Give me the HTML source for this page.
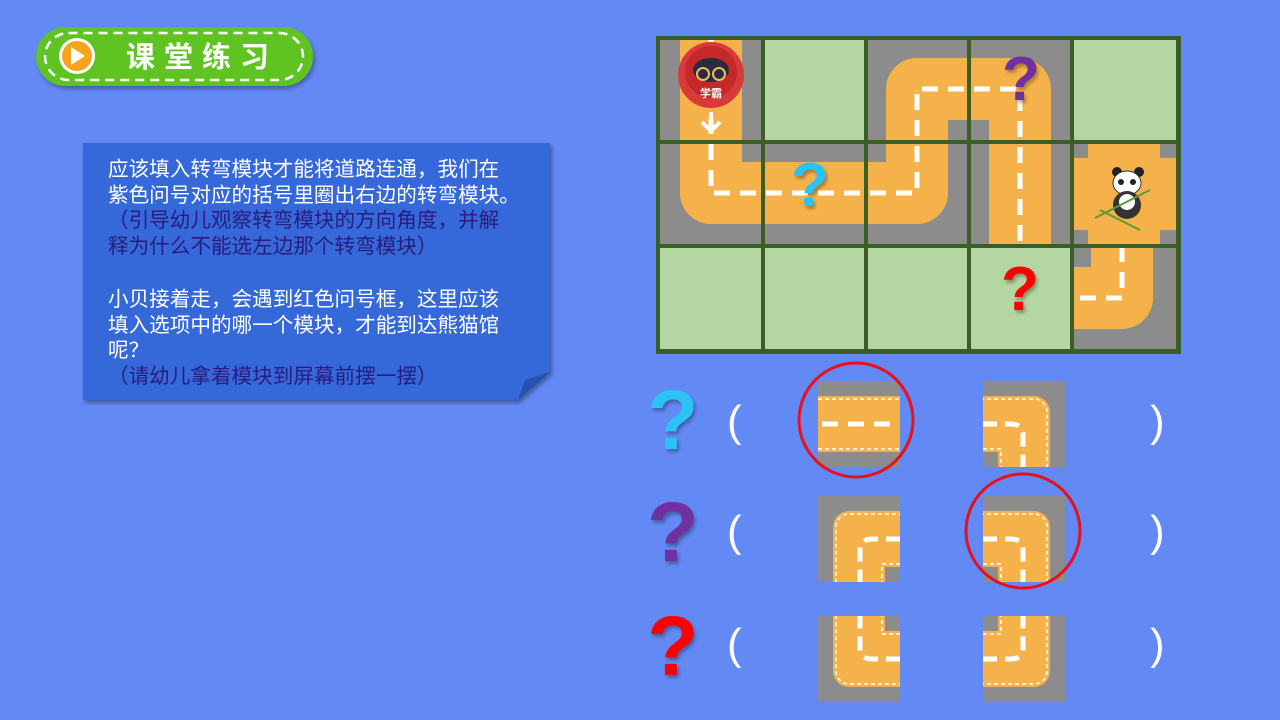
<!DOCTYPE html>
<html><head><meta charset="utf-8">
<style>
html,body{margin:0;padding:0}
body{width:1280px;height:720px;background:#6389F4;position:relative;overflow:hidden;font-family:"Liberation Sans","Noto Sans CJK SC",sans-serif}
.abs{position:absolute}
.txt{position:absolute;left:108px;font-size:20.6px;line-height:25.6px;white-space:nowrap;color:#fff}
.p{color:#2B1B7E}
.q{position:absolute;font-family:"Liberation Sans",sans-serif;font-weight:bold;text-shadow:2px 3px 3px rgba(0,0,0,.3)}
.par{position:absolute;color:#fff;font-size:44px;font-family:"Liberation Sans",sans-serif;font-weight:300}
</style></head><body>

<svg class="abs" style="left:30px;top:20px" width="300" height="75">
 <defs><filter id="sh"><feDropShadow dx="2" dy="3" stdDeviation="2" flood-opacity=".3"/></filter></defs>
 <rect x="6" y="7" width="277" height="59" rx="29.5" fill="#5FC421" filter="url(#sh)"/>
 <rect x="15" y="13" width="258" height="47" rx="23.5" fill="none" stroke="#fff" stroke-width="2.5" stroke-dasharray="9 6"/>
 <circle cx="47" cy="36" r="18" fill="#fff"/>
 <circle cx="47" cy="36" r="15" fill="#F4A51C"/>
 <path d="M41 27 L55 36 L41 45 Z" fill="#fff"/>
 <text x="96" y="47" font-size="29" font-weight="bold" fill="#fff" letter-spacing="9" font-family="'Noto Sans CJK SC',sans-serif">课堂练习</text>
</svg>

<svg class="abs" style="left:80px;top:140px" width="480" height="265">
 <defs><filter id="sh2"><feDropShadow dx="2" dy="3" stdDeviation="2" flood-opacity=".35"/></filter></defs>
 <path d="M3 3 H470 V232 L438 260 H3 Z" fill="#3568D8" filter="url(#sh2)"/>
 <path d="M470 232 L445 240 L438 260 Z" fill="#2850B0"/>
</svg>
<div class="txt" style="top:157px">应该填入转弯模块才能将道路连通，我们在</div>
<div class="txt" style="top:182.6px">紫色问号对应的括号里圈出右边的转弯模块。</div>
<div class="txt p" style="top:208.2px">（引导幼儿观察转弯模块的方向角度，并解</div>
<div class="txt p" style="top:233.8px">释为什么不能选左边那个转弯模块）</div>
<div class="txt" style="top:287px">小贝接着走，会遇到红色问号框，这里应该</div>
<div class="txt" style="top:312.6px">填入选项中的哪一个模块，才能到达熊猫馆</div>
<div class="txt" style="top:338.2px">呢？</div>
<div class="txt p" style="top:363.8px">（请幼儿拿着模块到屏幕前摆一摆）</div>

<svg class="abs" style="left:656px;top:36px" width="525" height="318" viewBox="656 36 525 318">
 <rect x="656" y="36" width="525" height="318" fill="#3B5E27"/>
 <g fill="#8C8C8C">
  <rect x="660" y="40" width="103" height="102"/><rect x="660" y="142" width="103" height="104"/>
  <rect x="763" y="142" width="103" height="104"/><rect x="866" y="40" width="103" height="102"/>
  <rect x="866" y="142" width="103" height="104"/><rect x="969" y="40" width="103" height="102"/>
  <rect x="969" y="142" width="103" height="104"/><rect x="1072" y="142" width="104" height="104"/>
  <rect x="1072" y="246" width="104" height="103"/>
 </g>
 <g fill="#B3D6A2">
  <rect x="763" y="40" width="103" height="102"/><rect x="1072" y="40" width="104" height="102"/>
  <rect x="660" y="246" width="103" height="103"/><rect x="763" y="246" width="103" height="103"/>
  <rect x="866" y="246" width="103" height="103"/><rect x="969" y="246" width="103" height="103"/>
 </g>
 <g fill="none" stroke-linejoin="round">
  <path d="M711 40 V193 H917 V89 H1020 V246" stroke="#F6B24A" stroke-width="62"/>
  <path d="M1122 246 V298 H1072" stroke="#F6B24A" stroke-width="62"/>
  <path d="M711 40 V193 H917 V89 H1020 V246" stroke="#fff" stroke-width="5" stroke-dasharray="16 10"/>
  <path d="M1122 246 V298 H1072" stroke="#fff" stroke-width="5" stroke-dasharray="16 10"/>
 </g>
 <rect x="1072" y="142" width="104" height="104" fill="#F6B24A"/>
 <g fill="#8C8C8C">
  <rect x="1072" y="142" width="16" height="16"/><rect x="1160" y="142" width="16" height="16"/>
  <rect x="1072" y="230" width="16" height="16"/><rect x="1160" y="230" width="16" height="16"/>
 </g>
 <g stroke="#3B5E27" stroke-width="4">
  <line x1="763" y1="36" x2="763" y2="354"/><line x1="866" y1="36" x2="866" y2="354"/>
  <line x1="969" y1="36" x2="969" y2="354"/><line x1="1072" y1="36" x2="1072" y2="354"/>
  <line x1="656" y1="142" x2="1181" y2="142"/><line x1="656" y1="246" x2="1181" y2="246"/>
 </g>
 <circle cx="711" cy="75" r="33" fill="#D83A3A"/>
 <circle cx="711" cy="72" r="26" fill="#C42828"/>
 <ellipse cx="711" cy="70" rx="18" ry="12" fill="#2A2A40"/>
 <circle cx="703" cy="74" r="6" fill="none" stroke="#E8C060" stroke-width="2"/>
 <circle cx="719" cy="74" r="6" fill="none" stroke="#E8C060" stroke-width="2"/>
 <text x="711" y="97" font-size="11" fill="#fff" text-anchor="middle" font-weight="bold" font-family="'Noto Sans CJK SC',sans-serif">学霸</text>
 <path d="M711 112 V131 M702 122 L711 131 L720 122" stroke="#fff" stroke-width="4" fill="none"/>
 <circle cx="1117" cy="172" r="5" fill="#222"/><circle cx="1139" cy="172" r="5" fill="#222"/>
 <ellipse cx="1127" cy="183" rx="14" ry="12" fill="#fff" stroke="#333"/>
 <ellipse cx="1127" cy="205" rx="14" ry="14" fill="#333"/>
 <ellipse cx="1127" cy="202" rx="8" ry="8" fill="#fff"/>
 <circle cx="1121" cy="182" r="3" fill="#222"/><circle cx="1133" cy="182" r="3" fill="#222"/>
 <path d="M1095 218 L1150 190 M1100 210 L1140 230" stroke="#5A9A3A" stroke-width="2"/>
</svg>
<div class="q" style="left:791px;top:150px;font-size:62px;color:#2BC3F5">?</div>
<div class="q" style="left:1002px;top:44px;font-size:62px;color:#7030A0">?</div>
<div class="q" style="left:1001px;top:254px;font-size:62px;color:#FF0000">?</div>

<div class="q" style="left:647px;top:372px;font-size:84px;color:#2BC3F5">?</div>
<div class="q" style="left:647px;top:484px;font-size:84px;color:#7030A0">?</div>
<div class="q" style="left:647px;top:598px;font-size:84px;color:#FF0000">?</div>
<div class="par" style="left:727px;top:397px">(</div>
<div class="par" style="left:727px;top:507px">(</div>
<div class="par" style="left:727px;top:620px">(</div>
<div class="par" style="left:1150px;top:397px">)</div>
<div class="par" style="left:1150px;top:507px">)</div>
<div class="par" style="left:1150px;top:620px">)</div>

<svg class="abs" style="left:0;top:0" width="1280" height="720">
 <defs>
  <g id="curve">
   <rect width="82" height="86" fill="#8C8C8C"/>
   <rect x="-30" y="15" width="97" height="110" rx="16" fill="#F6B24A"/>
   <rect x="-30" y="71" width="45" height="40" fill="#8C8C8C"/>
   <rect x="-30" y="18" width="94" height="110" rx="13" fill="none" stroke="#fff" stroke-width="1.5" stroke-dasharray="4 3"/>
   <path d="M0 68 H18 V86" fill="none" stroke="#fff" stroke-width="1.5" stroke-dasharray="4 3"/>
   <path d="M0 43 H28 Q40 43 40 55 V86" fill="none" stroke="#fff" stroke-width="5" stroke-dasharray="14 8"/>
  </g>
  <clipPath id="cp"><rect width="82" height="86"/></clipPath>
 </defs>
 <g transform="translate(818,381)">
  <rect width="82" height="86" fill="#8C8C8C"/>
  <rect y="15" width="82" height="56" fill="#F6B24A"/>
  <path d="M0 18 H82 M0 68 H82" stroke="#fff" stroke-width="1.5" stroke-dasharray="4 3"/>
  <path d="M4 43 H82" stroke="#fff" stroke-width="5" stroke-dasharray="16 10"/>
 </g>
 <g transform="translate(983,381)" clip-path="url(#cp)"><use href="#curve"/></g>
 <g transform="translate(818,496)"><g clip-path="url(#cp)" transform="translate(82,0) scale(-1,1)"><use href="#curve"/></g></g>
 <g transform="translate(983,496)" clip-path="url(#cp)"><use href="#curve"/></g>
 <g transform="translate(818,616)"><g clip-path="url(#cp)" transform="translate(82,86) scale(-1,-1)"><use href="#curve"/></g></g>
 <g transform="translate(983,616)"><g clip-path="url(#cp)" transform="translate(0,86) scale(1,-1)"><use href="#curve"/></g></g>
 <circle cx="856" cy="420" r="57" fill="none" stroke="#E8101A" stroke-width="3"/>
 <circle cx="1023" cy="531" r="57" fill="none" stroke="#E8101A" stroke-width="3"/>
</svg>
</body></html>
